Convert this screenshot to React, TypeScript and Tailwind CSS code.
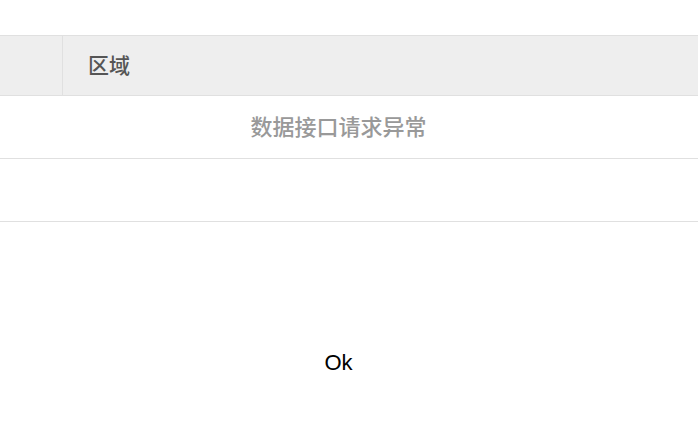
export default function App() {
    return (
        <div className="w-[698px] h-[426px] bg-white overflow-hidden" style={{ fontFamily: '"Liberation Sans", "Noto Sans CJK SC", sans-serif' }}>
            <div className="h-[35px]"></div>
            {/* TABLE */}
            <div className="border-t border-[#e0e0e0]">
                <div className="flex h-[60px] bg-[#eeeeee] border-b border-[#e0e0e0]">
                    <div className="w-[63px] border-r border-[#e0e0e0]"></div>
                    <div className="flex items-center pl-[25px] text-[21px] font-medium text-[#555555]">区域</div>
                </div>
                <div className="h-[63px] border-b border-[#e0e0e0]">
                    <div className="flex h-full items-center justify-center w-[677px] text-[22px] font-medium text-[#999999]">
                        数据接口请求异常
                    </div>
                </div>
                <div className="h-[63px] border-b border-[#e0e0e0]"></div>
            </div>
            <div className="flex justify-center w-[677px] pt-[130px] text-[22px] text-black leading-none">Ok</div>
        </div>
    );
}
